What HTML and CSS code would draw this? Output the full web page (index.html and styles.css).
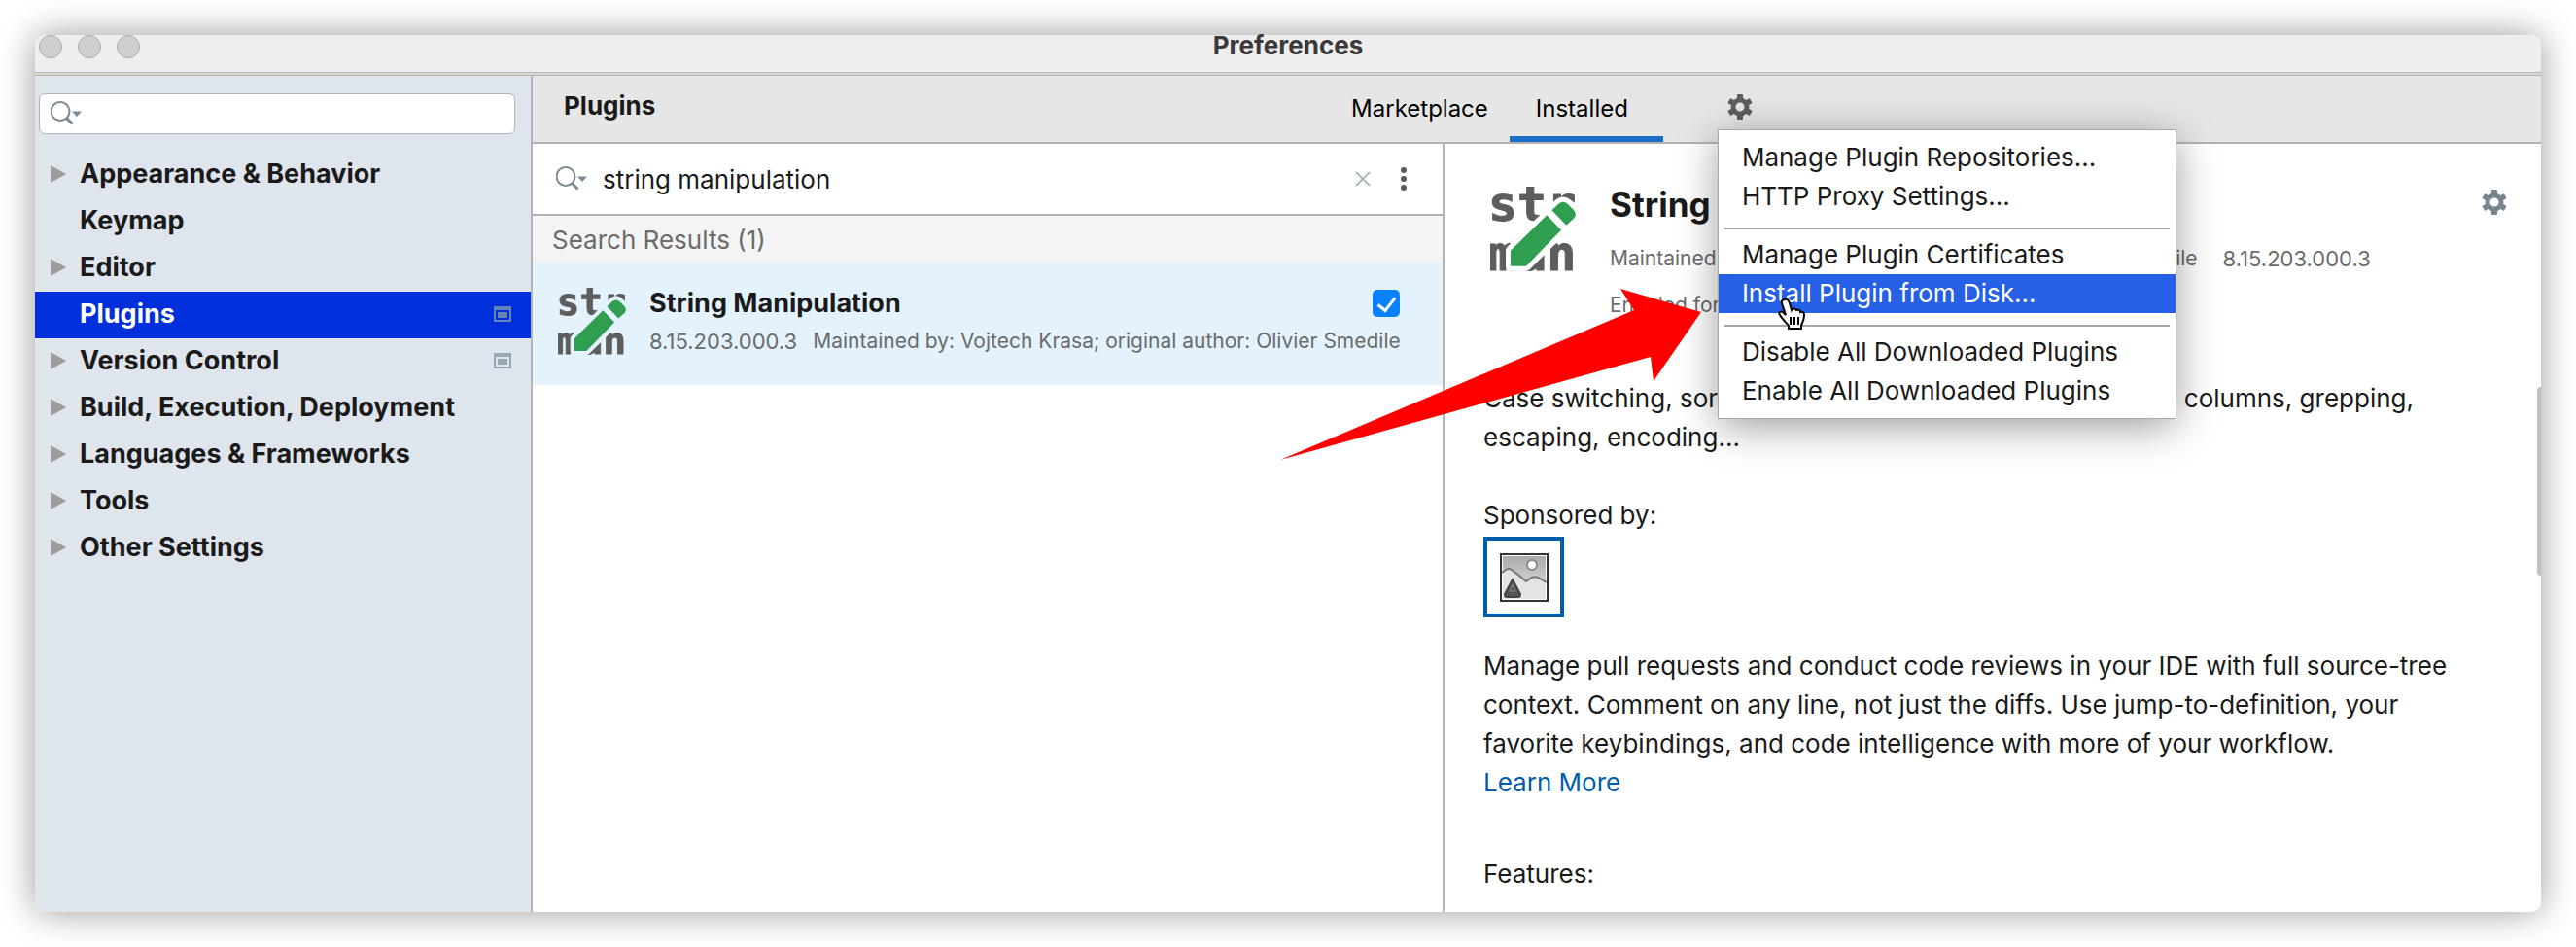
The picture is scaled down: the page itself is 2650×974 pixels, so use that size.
FILE: index.html
```html
<!DOCTYPE html>
<html lang="en">
<head>
<meta charset="utf-8">
<title>Preferences</title>
<link rel="stylesheet" href="styles.css">
</head>
<body>
<svg width="0" height="0" class="defs" aria-hidden="true">
  <symbol id="gear" viewBox="-14 -14 28 28">
    <circle r="7" fill="none" stroke="currentColor" stroke-width="5"/>
    <g fill="currentColor">
      <rect x="-3" y="-13" width="6" height="7" rx="1"/>
      <rect x="-3" y="-13" width="6" height="7" rx="1" transform="rotate(60)"/>
      <rect x="-3" y="-13" width="6" height="7" rx="1" transform="rotate(120)"/>
      <rect x="-3" y="-13" width="6" height="7" rx="1" transform="rotate(180)"/>
      <rect x="-3" y="-13" width="6" height="7" rx="1" transform="rotate(240)"/>
      <rect x="-3" y="-13" width="6" height="7" rx="1" transform="rotate(300)"/>
    </g>
  </symbol>
  <symbol id="search" viewBox="0 0 32 26">
    <circle cx="10" cy="10.500" r="9.500" fill="none" stroke="currentColor" stroke-width="2"/>
    <path d="M16.500 17.500l6 6" stroke="currentColor" stroke-width="3"/>
    <path d="M22 10.500h10l-5 5.500z" fill="currentColor"/>
  </symbol>
  <symbol id="project" viewBox="0 0 18 16">
    <path fill="currentColor" fill-rule="evenodd" d="M0 0h18v16H0zM2 4v10h14V4zM4 6h10v6H4z"/>
  </symbol>
  <mask id="cut" maskUnits="userSpaceOnUse" x="0" y="0" width="264" height="264">
    <rect width="264" height="264" fill="#fff"/>
    <path d="M63 197L211 53q14-12 28 0l20 20q12 13 2 24L111 245H63z" stroke="#000" stroke-width="30" stroke-linejoin="round"/>
  </mask>
  <symbol id="pencil" viewBox="0 0 264 264">
    <g fill="#2f9e50">
      <path d="M63 197L175 88l44 46L111 245H63z"/>
      <path d="M190 73l21-20q14-12 28 0l18 18q12 13 2 26l-24 22z"/>
    </g>
  </symbol>
</svg>
<div class="window">
  <header class="titlebar">
    <div class="lights"><span class="light"></span><span class="light"></span><span class="light"></span></div>
    <h1 class="window-title">Preferences</h1>
  </header>
  <div class="content">
    <nav class="sidebar">
      <label class="sidebar-search">
        <svg class="icon-search"><use href="#search"/></svg>
        <input type="text" class="field" aria-label="Search settings">
      </label>
      <ul class="tree">
        <li class="node branch">Appearance &amp; Behavior</li>
        <li class="node">Keymap</li>
        <li class="node branch">Editor</li>
        <li class="node selected">Plugins<svg class="icon-project"><use href="#project"/></svg></li>
        <li class="node branch">Version Control<svg class="icon-project"><use href="#project"/></svg></li>
        <li class="node branch">Build, Execution, Deployment</li>
        <li class="node branch">Languages &amp; Frameworks</li>
        <li class="node branch">Tools</li>
        <li class="node branch">Other Settings</li>
      </ul>
    </nav>
    <main class="main">
      <div class="header">
        <h2 class="page-title">Plugins</h2>
        <div class="tabs">
          <button class="tab">Marketplace</button>
          <button class="tab active">Installed</button>
          <div class="options">
            <button class="gear-button" aria-label="Plugin options"><svg class="icon-gear"><use href="#gear"/></svg></button>
            <div class="menu">
              <button class="menu-item">Manage Plugin Repositories...</button>
              <button class="menu-item">HTTP Proxy Settings...</button>
              <hr class="separator">
              <button class="menu-item">Manage Plugin Certificates</button>
              <button class="menu-item highlighted">Install Plugin from Disk...</button>
              <hr class="separator">
              <button class="menu-item">Disable All Downloaded Plugins</button>
              <button class="menu-item">Enable All Downloaded Plugins</button>
            </div>
          </div>
        </div>
      </div>
      <div class="panes">
        <section class="list">
          <div class="list-search">
            <svg class="icon-search"><use href="#search"/></svg>
            <input type="text" class="field" value="string manipulation" aria-label="Search plugins">
            <button class="icon-button" aria-label="Clear"><svg width="16" height="16" viewBox="0 0 16 16"><path d="M1 1l14 14M15 1L1 15" stroke="#aeb9bd" stroke-width="2"/></svg></button>
            <button class="icon-button" aria-label="More"><svg width="8" height="26" viewBox="0 0 8 26"><g fill="#5a5a5a"><circle cx="4" cy="4" r="3"/><circle cx="4" cy="13" r="3"/><circle cx="4" cy="22" r="3"/></g></svg></button>
          </div>
          <h3 class="group">Search Results (1)</h3>
          <article class="plugin">
            <svg class="logo-small" viewBox="0 0 264 264"><g mask="url(#cut)" class="logo-text"><text x="-6" y="106">str</text><text x="-6" y="258">man</text></g><use href="#pencil"/></svg>
            <div class="plugin-info">
              <div class="plugin-top">
                <label class="plugin-name" for="enable">String Manipulation</label>
                <input type="checkbox" id="enable" class="check" checked>
              </div>
              <div class="meta"><span class="version">8.15.203.000.3</span><span>Maintained by: Vojtech Krasa; original author: Olivier Smedile</span></div>
            </div>
          </article>
        </section>
        <section class="detail">
          <div class="detail-head">
            <svg class="logo-large" viewBox="0 0 264 264"><g mask="url(#cut)" class="logo-text"><text x="-6" y="106">str</text><text x="-6" y="258">man</text></g><use href="#pencil"/></svg>
            <div class="detail-info">
              <h2 class="detail-name">String Manipulation</h2>
              <div class="detail-meta"><span>Maintained by: Vojtech Krasa; original author: Olivier Smedile</span><span class="version">8.15.203.000.3</span></div>
              <div class="detail-meta">Enabled for all projects</div>
            </div>
            <button class="gear-button muted" aria-label="Settings"><svg class="icon-gear"><use href="#gear"/></svg></button>
          </div>
          <div class="description">
            <p class="intro">Case switching, sorting, filtering, incrementing, aligning to columns, grepping, escaping, encoding...</p>
            <p class="sponsor">Sponsored by:</p>
            <a href="#" class="sponsor-link" aria-label="Sponsor">
              <svg width="50" height="50" viewBox="0 0 50 50">
                <defs><linearGradient id="sky" x2="0" y2="1"><stop stop-color="#aaa"/><stop offset="1" stop-color="#e8e8e8"/></linearGradient></defs>
                <rect x="1" y="1" width="48" height="48" fill="#fff"/>
                <rect x="3" y="3" width="44" height="44" fill="url(#sky)"/>
                <path d="M3 20l6-4 18 13 8-6 12 7v17H3z" fill="#e4e4e4"/>
                <path d="M2 20l4-3q3-2 6 0l8 6 7 6 4-3q4-3 8-1l9 5" fill="none" stroke="#777" stroke-width="2"/>
                <circle cx="33" cy="12" r="5" fill="#fff" stroke="#888" stroke-width="2"/>
                <path d="M13 27l8 15q0 3-2 3H7q-2 0-2-3z" fill="#555" stroke="#444" stroke-width="2" stroke-linejoin="round"/>
                <path d="M13 32l-3 7h6z" fill="none" stroke="#8a8a8a" stroke-width="1"/>
                <rect x="1" y="1" width="48" height="48" fill="none" stroke="#333" stroke-width="2"/>
              </svg>
            </a>
            <p class="body">Manage pull requests and conduct code reviews in your IDE with full source-tree context. Comment on any line, not just the diffs. Use jump-to-definition, your favorite keybindings, and code intelligence with more of your workflow.<br><a href="#" class="link">Learn More</a></p>
            <p class="features">Features:</p>
          </div>
          <div class="thumb"></div>
        </section>
      </div>
    </main>
  </div>
  <svg class="pointer-arrow" viewBox="0 0 434 178"><path d="M433 25L350 1l14 22L0 177l381-106 3 25z" fill="#fe0000"/></svg>
  <svg class="cursor" viewBox="0 0 32 36"><path d="M10 2c3-1 4 1 5 4l2 7c1-2 4-2 5 0 2-1 4 0 4 2 3-1 4 1 4 3 0 6-2 7-3 11v3H14v-3c-3-4-7-7-9-11-2-3 1-5 4-2l2 2L7 6c-1-2 1-4 3-4z" fill="#fff" stroke="#000" stroke-width="2"/><path d="M16 20v8M20 20v8M24 20v8" stroke="#000" stroke-width="2"/></svg>
</div>
</body>
</html>
```

FILE: styles.css
```css
* { box-sizing: border-box; }

body {
  margin: 0;
  padding: 36px;
  min-height: 100vh;
  display: flex;
  background: #fff;
  color: #1a1a1a;
  font: 26px/40px Inter, "Liberation Sans", sans-serif;
}

h1, h2, h3, p, ul { margin: 0; padding: 0; font-size: inherit; }
button, input { font: inherit; color: inherit; border: 0; padding: 0; margin: 0; background: none; }
.defs { position: absolute; }

.window {
  position: relative;
  flex: 1;
  display: flex;
  flex-direction: column;
  border-radius: 10px;
  background: #fff;
  box-shadow: 0 0 36px rgba(0, 0, 0, 0.4);
}

.titlebar {
  position: relative;
  height: 42px;
  background: #efedee;
  border-radius: 10px 10px 0 0;
  border-bottom: 1px solid #b4b4b6;
  box-shadow: inset 0 -2px #d8d8d8, inset 0 -3px #b9b9bb;
}
.lights { display: flex; gap: 16px; padding-left: 4px; }
.light { width: 24px; height: 24px; border-radius: 50%; background: #cecece; border: 1px solid #a9a9a9; }
.window-title {
  position: absolute;
  inset: 0;
  text-align: center;
  line-height: 22px;
  color: #3a3a3a;
}

.content { flex: 1; display: flex; min-height: 0; }

.sidebar {
  width: 512px;
  flex: none;
  padding-top: 18px;
  background: #dfe5ed;
  border-right: 2px solid #b2b4b7;
  border-radius: 0 0 0 10px;
}
.sidebar-search {
  display: flex;
  align-items: center;
  height: 42px;
  margin: 0 16px 0 4px;
  padding-left: 11px;
  background: #fff;
  border: 1px solid #b0b3b7;
  border-radius: 6px;
}
.icon-search { width: 32px; height: 26px; flex: none; color: #7a8a92; }
.field { flex: 1; min-width: 0; outline: 0; }
.tree { list-style: none; padding-top: 18px; }
.node {
  position: relative;
  display: flex;
  align-items: center;
  justify-content: space-between;
  height: 48px;
  padding: 0 20px 2px 46px;
  font-size: 27px;
  font-weight: 700;
}
.branch::before {
  content: "";
  position: absolute;
  left: 16px;
  top: 14px;
  border: solid transparent;
  border-width: 9px 0 9px 16px;
  border-left-color: #9b9b9b;
}
.selected { background: #002fdb; color: #fff; }
.icon-project { width: 18px; height: 16px; color: #98a9b2; }
.selected .icon-project { color: #6584b4; }

.main { flex: 1; min-width: 0; display: flex; flex-direction: column; }
.header {
  display: grid;
  grid-template-columns: 814fr auto 805fr;
  height: 70px;
  background: #e6e6e6;
  border-bottom: 2px solid #b4b4b4;
}
.page-title { padding-left: 32px; line-height: 62px; }
.tabs { display: flex; }
.tab { padding: 0 36px 0 27px; font-size: 24px; color: #000; border: solid transparent; border-width: 6px 0; }
.tab:first-child { padding-right: 22px; }
.active { border-bottom-color: #1a6ec7; }
.options { position: relative; z-index: 2; padding: 18px 4px 0 65px; }
.gear-button { display: block; width: 28px; height: 28px; color: #5e5e5e; }
.icon-gear { display: block; width: 28px; height: 28px; }
.muted { color: #77868e; margin-top: 2px; }

.menu {
  position: absolute;
  left: 57px;
  top: 56px;
  width: 470px;
  padding: 8px 0;
  background: #fff;
  box-shadow: 0 0 0 1px #a8a8a8, 0 8px 40px rgba(0, 0, 0, 0.4);
}
.menu-item { display: block; width: 100%; height: 40px; padding: 0 0 4px 24px; text-align: left; white-space: nowrap; }
.highlighted { background: #2560e6; color: #fff; }
.separator { height: 2px; margin: 12px 6px 6px; border: 0; background: #a5a5a5; }

.panes { flex: 1; display: grid; grid-template-columns: 938fr 1128fr; }
.list { min-width: 0; border-right: 2px solid #b4b4b4; }
.list-search {
  display: flex;
  align-items: center;
  height: 74px;
  padding: 0 36px 0 24px;
  border-bottom: 2px solid #b4b4b4;
}
.list-search .field { padding: 2px 0 0 16px; }
.icon-button { display: flex; padding-left: 30px; }
.group { height: 48px; padding-left: 20px; line-height: 50px; background: #f4f4f4; color: #6b6b6b; font-weight: 400; }
.plugin { display: flex; gap: 24px; height: 126px; padding: 26px 37px 0 26px; background: #e4f2fe; }
.logo-small { width: 70px; height: 70px; flex: none; }
.logo-large { width: 88px; height: 88px; flex: none; }
.logo-text { font: 700 150px "DejaVu Sans Mono", monospace; fill: #5d5d5d; stroke: #5d5d5d; stroke-width: 3px; }
.plugin-info { flex: 1; min-width: 0; }
.plugin-top { display: flex; align-items: center; justify-content: space-between; height: 32px; padding-right: 7px; }
.plugin-name { font-size: 27px; font-weight: 700; }
.check {
  appearance: none;
  width: 28px;
  height: 28px;
  border-radius: 5px;
  background: #0a82ff;
}
.check::after {
  content: "";
  display: block;
  width: 8px;
  height: 15px;
  margin: 4px 0 0 9px;
  border: solid #fff;
  border-width: 0 3px 3px 0;
  transform: rotate(38deg);
}
.meta { display: flex; gap: 16px; font-size: 21px; line-height: 46px; color: #6b6b6b; white-space: nowrap; }
.version { font-size: 22px; }

.detail { position: relative; min-width: 0; padding: 44px 60px 0 40px; }
.detail-head { display: flex; gap: 35px; padding-left: 7px; height: 198px; margin-right: -26px; }
.detail-info { flex: 1; min-width: 0; }
.detail-name { font-size: 35px; line-height: 36px; padding-bottom: 14px; }
.detail-meta { display: flex; gap: 26px; font-size: 21px; line-height: 48px; color: #6b6b6b; white-space: nowrap; }
.intro { padding-bottom: 40px; }
.sponsor-link { display: grid; place-items: center; width: 83px; height: 83px; margin-top: 2px; border: 4px solid #005dac; }
.body { padding-top: 30px; }
.link { color: #005dac; text-decoration: none; }
.features { padding-top: 54px; }
.thumb { position: absolute; right: 0; top: 250px; width: 4px; height: 194px; background: #c1c1c1; border-radius: 4px 0 0 4px; }

.pointer-arrow { position: absolute; left: 1281px; top: 260px; width: 434px; height: 178px; z-index: 3; }
.cursor { position: absolute; left: 1790px; top: 270px; width: 32px; height: 36px; z-index: 4; }
```
